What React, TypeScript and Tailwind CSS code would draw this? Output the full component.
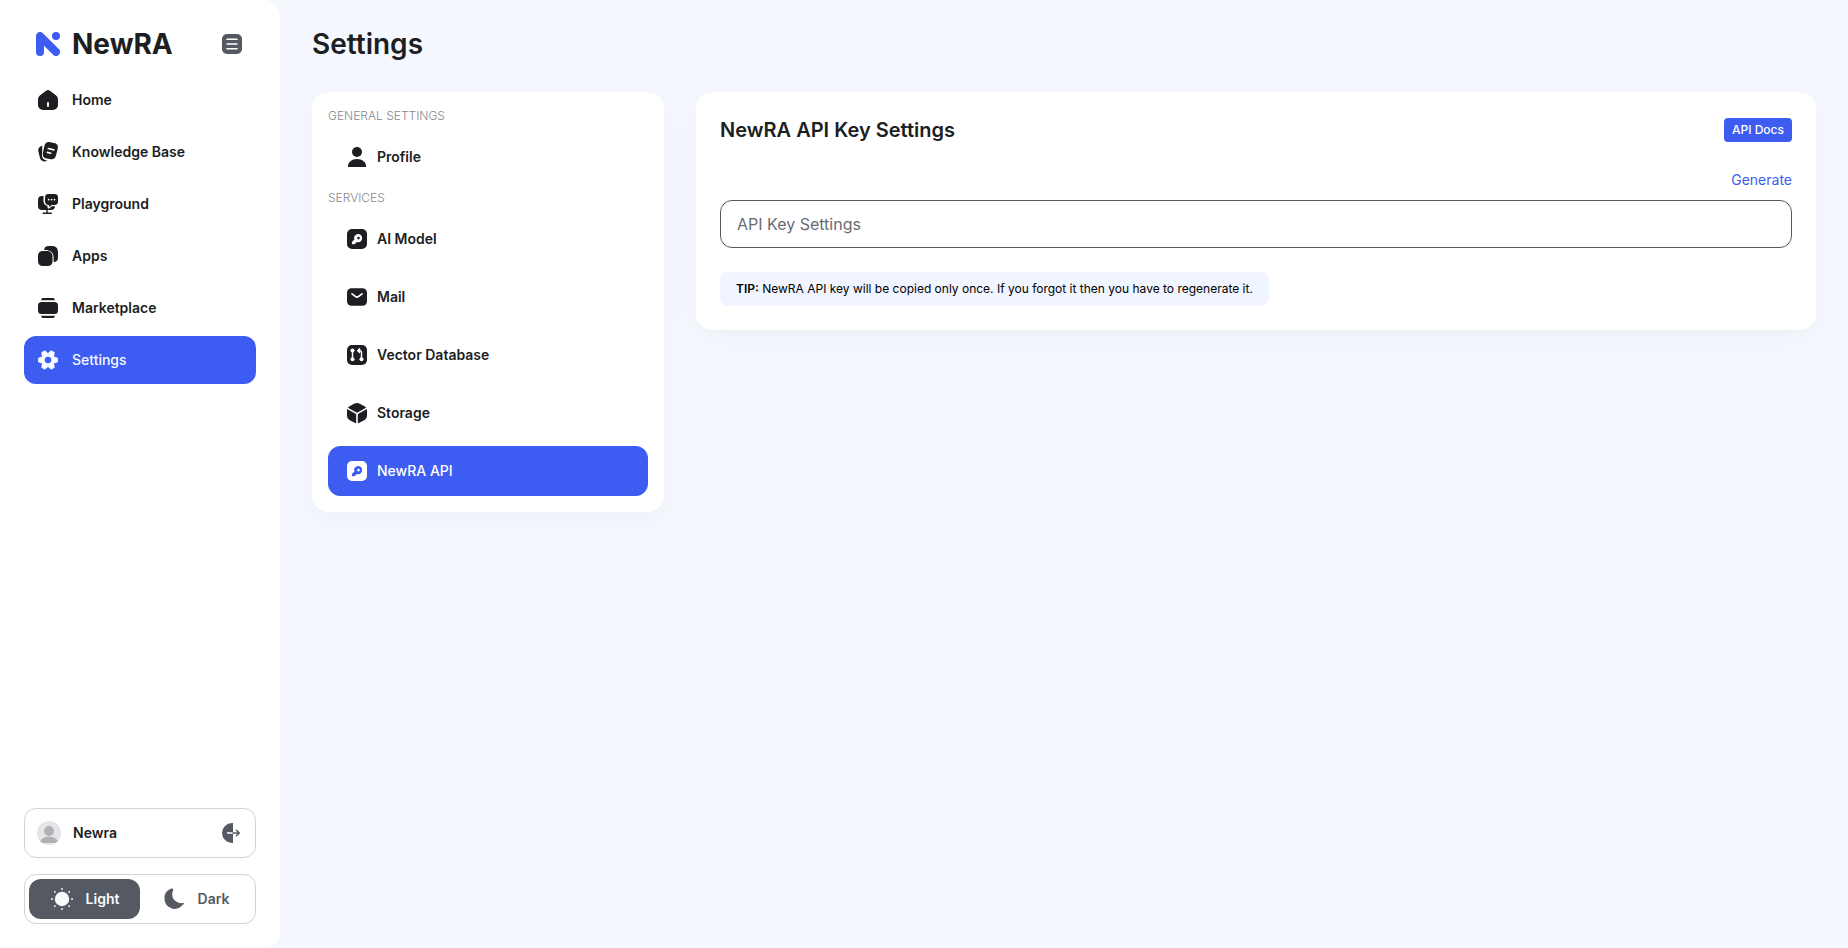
import type { ReactNode } from "react";

type NavItem = {
  label: string;
  icon: ReactNode;
  active?: boolean;
};

function Icon({ children }: { children: ReactNode }) {
  return (
    <svg width="24" height="24" viewBox="0 0 24 24" fill="currentColor" aria-hidden="true" className="shrink-0">
      {children}
    </svg>
  );
}

const HomeIcon = (
  <Icon>
    <path
      fillRule="evenodd"
      d="M10.1 2.7a3.2 3.2 0 0 1 3.8 0l6 4.5A5 5 0 0 1 22 11.2V17a5 5 0 0 1-5 5H7a5 5 0 0 1-5-5v-5.800a5 5 0 0 1 2.100-4zM12 14a.95.95 0 0 0-.95.950v3.100a.95.95 0 0 0 1.900 0v-3.100A.95.95 0 0 0 12 14z"
    />
  </Icon>
);

const KnowledgeIcon = (
  <Icon>
    <path d="M6.300 5.700 5.500 6A4.300 4.300 0 0 0 2.300 11.200l1.700 6.700A4.600 4.600 0 0 0 9.700 21.300l2-.6c-3.700-.5-6.300-2.400-5.600-6.900z" />
    <path
      fillRule="evenodd"
      d="m17.800 2.900-3.300-.7c-3.300-.7-5.300.3-6.100 3.700l-1.400 6.300c-.8 3.600.3 5.500 3.800 6.300l2.600.6c4 .9 5.800-.4 6.700-4.100l1.500-5.800c.9-3.800.1-5.400-3.800-6.300zM12.500 7.700l5.500 1.400a.85.85 0 0 1-.4 1.650L12.100 9.350a.85.85 0 0 1 .4-1.650zm-.9 3.800 3.300.9a.85.85 0 0 1-.4 1.650l-3.300-.9a.85.85 0 0 1 .4-1.650z"
    />
  </Icon>
);

const PlaygroundIcon = (
  <Icon>
    <path d="M7.500 4H6a4 4 0 0 0-4 4v6a4 4 0 0 0 4 4h4.300v2.600H7.200a.7.7 0 0 0 0 1.400h8.100a.7.7 0 0 0 0-1.400h-3.600V18H15a4 4 0 0 0 4-3.800h-3.200l-2.300 2c-.8.7-2 .2-2-.9v-1.400C8.900 13.400 7.500 11.700 7.500 9z" />
    <path
      fillRule="evenodd"
      d="M12.400 2h6.200A3.400 3.400 0 0 1 22 5.400v4.200a3.400 3.400 0 0 1-3.400 3.400h-2.800l-2.700 2v-2.100A3.400 3.400 0 0 1 9 9.600V5.400A3.400 3.400 0 0 1 12.400 2zm.3 4.700a.9.9 0 1 0 0 1.800.9.900 0 0 0 0-1.800zm2.900 0a.9.9 0 1 0 0 1.800.9.900 0 0 0 0-1.800zm2.900 0a.9.9 0 1 0 0 1.800.9.900 0 0 0 0-1.800z"
    />
  </Icon>
);

const AppsIcon = (
  <Icon>
    <path d="M22 8.100v4.800c0 3.400-1.200 5-4.400 5.100V14c0-5-2.500-8-8.600-8H8.100c.2-2.800 1.700-4 5-4H16c3.800 0 6 2.200 6 6.100z" />
    <path d="M7 7h4.500c2.800 0 5 2.600 5 5.500V17c0 3.300-1.700 5-5 5H7c-3.300 0-5-1.700-5-5v-5c0-3.300 1.700-5 5-5z" />
  </Icon>
);

const MarketplaceIcon = (
  <Icon>
    <rect x="2" y="6" width="20" height="12" rx="3.500" />
    <path d="M7 2h10c1 0 1.800.8 1.800 2.200H5.200C5.200 2.800 6 2 7 2zM5.200 19.800h13.600c0 1.400-.8 2.200-1.800 2.200H7c-1 0-1.800-.8-1.800-2.200z" />
  </Icon>
);

const SettingsIcon = (
  <Icon>
    <path
      fillRule="evenodd"
      d="M20.100 9.220c-1.810 0-2.550-1.280-1.650-2.850a1.900 1.900 0 0 0-.700-2.590l-1.730-.990a1.670 1.670 0 0 0-2.280.6l-.110.190c-.900 1.570-2.380 1.570-3.290 0l-.110-.190a1.640 1.640 0 0 0-2.250-.6l-1.730.990a1.900 1.900 0 0 0-.700 2.600c.910 1.560.170 2.840-1.640 2.840A1.910 1.910 0 0 0 2 11.120v1.760c0 1.040.85 1.900 1.900 1.900 1.810 0 2.550 1.280 1.640 2.850a1.900 1.900 0 0 0 .700 2.590l1.730.990c.79.47 1.810.190 2.280-.6l.110-.190c.900-1.570 2.380-1.570 3.290 0l.110.190c.47.79 1.490 1.070 2.280.6l1.730-.990a1.900 1.900 0 0 0 .700-2.590c-.910-1.570-.170-2.850 1.640-2.850a1.910 1.910 0 0 0 1.900-1.900v-1.760a1.920 1.920 0 0 0-1.910-1.900zM12 15.250a3.250 3.250 0 1 1 0-6.500 3.250 3.250 0 0 1 0 6.500z"
    />
  </Icon>
);

const ProfileIcon = (
  <Icon>
    <circle cx="12" cy="7" r="5" />
    <path d="M12 14c-5.200 0-9.100 3.200-9.100 7.500 0 .3.200.5.500.5h17.200c.3 0 .5-.2.5-.5 0-4.300-3.900-7.500-9.100-7.500z" />
  </Icon>
);

const KeyIcon = (
  <Icon>
    <path
      fillRule="evenodd"
      d="M7 2h10a5 5 0 0 1 5 5v10a5 5 0 0 1-5 5H7a5 5 0 0 1-5-5V7a5 5 0 0 1 5-5zm8.900 6.100a4 4 0 0 0-6.500 4.300l-2.100 2.100c-.3.3-.4.600-.4 1v1.200c0 .3.200.5.500.5h1.900c.4 0 .7-.2.900-.5l1.600-1.600c1.400.5 3 .2 4.100-.9 1.700-1.700 1.700-4.400 0-6.100zm-2.400 4.300a1.350 1.350 0 1 1 0-2.700 1.350 1.350 0 0 1 0 2.700z"
    />
  </Icon>
);

const MailIcon = (
  <Icon>
    <rect x="2" y="3.300" width="20" height="17.400" rx="4.500" />
    <path d="m7 8.800 3.300 2.600c1 .8 2.400.8 3.400 0L17 8.800" fill="none" stroke="#fff" strokeWidth="1.700" strokeLinecap="round" />
  </Icon>
);

const DatabaseIcon = (
  <Icon>
    <rect x="2" y="2" width="20" height="20" rx="5" />
    <g stroke="#fff" strokeWidth="1.400" fill="none" strokeLinecap="round" strokeLinejoin="round">
      <path d="M7.500 8v8M16.500 16V9.300c0-1-.6-1.600-1.600-1.600h-1.500" />
      <path d="m14.600 5.700-1.900 2 1.900 1.900z" fill="#fff" />
    </g>
    <g fill="#fff">
      <circle cx="7.500" cy="7.500" r="2" />
      <circle cx="7.500" cy="16.300" r="2" />
      <circle cx="16.500" cy="16.300" r="2" />
    </g>
  </Icon>
);

const StorageIcon = (
  <Icon>
    <path d="m20.700 6.900-8.100 4.600c-.4.200-.8.200-1.200 0L3.300 6.900c-.3-.2-.3-.6 0-.8L9.500 2.600a5.200 5.200 0 0 1 5 0l6.200 3.500c.3.200.3.600 0 .8z" />
    <path d="M11.200 13.700v7.700c0 .5-.5.800-1 .6L4.300 18.900A4.300 4.300 0 0 1 2 15.100V9c0-.6.600-.9 1.100-.6l7.500 4.300c.4.200.6.600.6 1zM12.800 13.700v7.700c0 .5.5.8 1 .6l5.900-3.100A4.300 4.300 0 0 0 22 15.100V9c0-.6-.6-.9-1.100-.6l-7.500 4.300c-.4.200-.6.600-.6 1z" />
  </Icon>
);

const MenuIcon = (
  <Icon>
    <rect x="2" y="2" width="20" height="20" rx="5" />
    <path d="M7 7.300h10M7 12h10M7 16.700h10" stroke="#fff" strokeWidth="1.500" strokeLinecap="round" />
  </Icon>
);

const LogoutIcon = (
  <Icon>
    <path
      fillRule="evenodd"
      d="M14 2v9.250H8.500a.75.75 0 0 0 0 1.500H14V22h-1a10 10 0 0 1 0-20z"
    />
    <path d="M14 12h6m-2.500-2.800 2.800 2.800-2.800 2.800" fill="none" stroke="currentColor" strokeWidth="1.500" strokeLinecap="round" strokeLinejoin="round" />
  </Icon>
);

const SunIcon = (
  <Icon>
    <circle cx="12" cy="12" r="7.200" />
    <path
      d="M12 1.900V2M12 22v.1M1.900 12H2M22 12h.1M4.800 4.800l.1.100M19.100 19.100l.1.100M19.200 4.800l-.1.100M4.900 19.100l-.1.100"
      stroke="currentColor"
      strokeWidth="1.800"
      strokeLinecap="round"
    />
  </Icon>
);

const MoonIcon = (
  <Icon>
    <path d="M22.300 15.900c-.2-.3-.7-.7-1.900-.5-.7.100-1.400.2-2.100.100a9 9 0 0 1-6.200-3c-1.500-1.700-2.500-3.900-2.500-6.300 0-1.300.3-2.600.8-3.800.5-1.200.1-1.800-.100-2.100-.3-.3-.9-.7-2.200-.2A11 11 0 0 0 1.400 11.300 11 11 0 0 0 8.600 20.900c1 .4 2 .6 3.100.7h.5a10.500 10.500 0 0 0 8.500-4.300c2-1.200 1.800-1.100 1.600-1.400z" transform="translate(1.200 1.600) scale(.94)" />
  </Icon>
);

const mainNav: NavItem[] = [
  { label: "Home", icon: HomeIcon },
  { label: "Knowledge Base", icon: KnowledgeIcon },
  { label: "Playground", icon: PlaygroundIcon },
  { label: "Apps", icon: AppsIcon },
  { label: "Marketplace", icon: MarketplaceIcon },
  { label: "Settings", icon: SettingsIcon, active: true },
];

const generalNav: NavItem[] = [{ label: "Profile", icon: ProfileIcon }];

const serviceNav: NavItem[] = [
  { label: "AI Model", icon: KeyIcon },
  { label: "Mail", icon: MailIcon },
  { label: "Vector Database", icon: DatabaseIcon },
  { label: "Storage", icon: StorageIcon },
  { label: "NewRA API", icon: KeyIcon, active: true },
];

function Sidebar() {
  return (
    <aside className="flex w-70 shrink-0 flex-col rounded-r-2xl bg-white p-6">
      <div className="flex h-10 items-center justify-between px-3">
        <a href="#" className="flex items-center gap-3">
          <svg width="24" height="24" viewBox="0 0 24 24" fill="#3d5cf2" aria-hidden="true">
            <path d="M0 4a4 4 0 0 1 6.900-2.800l15.900 15.900A4 4 0 0 1 17.100 22.800L8 13.700V20a4 4 0 0 1-8 0z" />
            <circle cx="20" cy="4" r="4" />
          </svg>
          <span className="text-[28px] font-bold">NewRA</span>
        </a>
        <button type="button" aria-label="Toggle sidebar" className="text-[#555962]">
          {MenuIcon}
        </button>
      </div>

      <nav className="mt-3 flex flex-col gap-1">
        {mainNav.map((item) => (
          <a
            key={item.label}
            href="#"
            className={`flex h-12 items-center gap-3 rounded-xl px-3 text-sm ${
              item.active ? "bg-[#3d5cf2] font-medium text-[#f5f8ff]" : "font-semibold"
            }`}
          >
            {item.icon}
            {item.label}
          </a>
        ))}
      </nav>

      <div className="mt-auto flex flex-col gap-4">
        <div className="flex items-center gap-3 rounded-xl border border-[#d1d3d9] p-3">
          <svg width="24" height="24" viewBox="0 0 24 24" aria-hidden="true">
            <circle cx="12" cy="12" r="12" fill="#e4e5e7" />
            <circle cx="12" cy="10" r="5" fill="#aeb1b6" />
            <path d="M3.200 20.500c1-3 4.500-4.700 8.800-4.700s7.800 1.700 8.800 4.700a12 12 0 0 1-2.300 1.600h-13a12 12 0 0 1-2.300-1.600z" fill="#aeb1b6" />
          </svg>
          <span className="text-sm font-semibold">Newra</span>
          <button type="button" aria-label="Log out" className="ml-auto text-[#555962]">
            {LogoutIcon}
          </button>
        </div>

        <div className="flex rounded-xl border border-[#d1d3d9] p-1 text-sm font-semibold text-[#555962]">
          <button type="button" className="flex h-10 flex-1 items-center justify-center gap-3 rounded-xl bg-[#555962] text-[#f9fafc]">
            {SunIcon}
            Light
          </button>
          <button type="button" className="flex h-10 flex-1 items-center justify-center gap-3 rounded-xl">
            {MoonIcon}
            Dark
          </button>
        </div>
      </div>
    </aside>
  );
}

function SettingsGroup({ title, items }: { title: string; items: NavItem[] }) {
  return (
    <section className="flex flex-col gap-2">
      <h2 className="text-xs font-light text-[#85888f] uppercase">{title}</h2>
      {items.map((item) => (
        <a
          key={item.label}
          href="#"
          className={`flex items-center gap-2 rounded-xl border px-4 py-3 text-sm ${
            item.active ? "border-[#3d5cf2] bg-[#3d5cf2] font-medium text-white" : "border-transparent font-semibold"
          }`}
        >
          {item.icon}
          {item.label}
        </a>
      ))}
    </section>
  );
}

export default function App() {
  return (
    <div className="flex min-h-screen bg-[#f5f8ff] font-['Inter',sans-serif] text-[#1c1e22]">
      <Sidebar />
      <main className="min-w-0 flex-1 px-8 py-6">
        <h1 className="text-[28px] leading-10 font-semibold">Settings</h1>

        <div className="mt-7 flex items-start gap-8">
          <nav className="flex w-88 shrink-0 flex-col gap-2 rounded-2xl bg-white p-4 shadow-[0_8px_32px_rgba(0,0,0,0.04)]">
            <SettingsGroup title="General Settings" items={generalNav} />
            <SettingsGroup title="Services" items={serviceNav} />
          </nav>

          <section className="flex min-w-0 flex-1 flex-col rounded-2xl bg-white p-6 shadow-[0_8px_32px_rgba(0,0,0,0.04)]">
            <div className="flex items-center justify-between">
              <h2 className="text-xl font-semibold">NewRA API Key Settings</h2>
              <a href="#" className="rounded bg-[#3d5cf2] px-2 py-1 text-xs font-medium text-white">
                API Docs
              </a>
            </div>
            <button type="button" className="mt-[26px] self-end text-sm text-[#3d5cf2]">
              Generate
            </button>
            <input
              type="text"
              aria-label="API Key Settings"
              placeholder="API Key Settings"
              className="mt-[10px] h-12 w-full rounded-xl border border-[#555962] px-4 text-base placeholder:text-[#696c73]"
            />
            <p className="mt-6 self-start rounded-lg bg-[#f1f5ff] px-4 py-2 text-xs leading-[18px] text-black">
              <strong className="font-semibold">TIP:</strong> NewRA API key will be copied only once. If you forgot it
              then you have to regenerate it.
            </p>
          </section>
        </div>
      </main>
    </div>
  );
}
